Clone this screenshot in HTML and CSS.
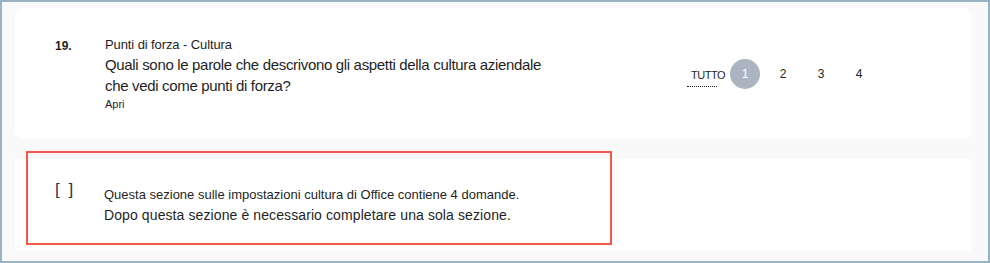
FILE: index.html
```html
<!DOCTYPE html>
<html lang="it">
<head>
    <meta charset="UTF-8">
    <title>Punti di forza - Cultura</title>
    <link rel="stylesheet" href="styles.css">
</head>
<body>
    <div class="frame">
        <div class="card question-card">
            <div class="q-number">19.</div>
            <div class="q-body">
                <div class="q-title">Punti di forza - Cultura</div>
                <div class="q-text">Quali sono le parole che descrivono gli aspetti della cultura aziendale<br>che vedi come punti di forza?</div>
                <div class="q-open">Apri</div>
            </div>
            <div class="pager">
                <div class="pager-all">
                    <span class="all-label">TUTTO</span>
                    <span class="all-dots"></span>
                </div>
                <span class="page current">1</span>
                <span class="page">2</span>
                <span class="page">3</span>
                <span class="page">4</span>
            </div>
        </div>

        <div class="card section-card">
            <div class="bracket">[ ]</div>
            <div class="section-text">
                <div class="line-a">Questa sezione sulle impostazioni cultura di Office contiene 4 domande.</div>
                <div class="line-b">Dopo questa sezione è necessario completare una sola sezione.</div>
            </div>
            <div class="highlight"></div>
        </div>
    </div>
</body>
</html>
```

FILE: styles.css
```css
body {
    margin: 0;
    font-family: "Liberation Sans", Arial, sans-serif;
    color: #1f1f1f;
}
.frame {
    box-sizing: border-box;
    width: 990px;
    height: 263px;
    border: 2px solid #98b4c4;
    background: #f9f9f9;
    padding: 6px 17px 0 13px;
}
.card {
    background: #fff;
    position: relative;
}
.question-card {
    height: 131px;
    border-radius: 8px;
    margin-bottom: 20px;
    display: flex;
    box-sizing: border-box;
    padding: 30px 0 0 40px;
}
.q-number {
    width: 50px;
    font-size: 12px;
    font-weight: bold;
    line-height: 17px;
}
.q-body {
    width: 582px;
}
.q-title {
    font-size: 13px;
    line-height: 18px;
    letter-spacing: -0.1px;
    margin-top: -2px;
}
.q-text {
    font-size: 15px;
    line-height: 21px;
    letter-spacing: -0.33px;
}
.q-open {
    font-size: 11px;
    line-height: 17px;
}
.pager {
    display: flex;
    align-items: center;
    gap: 8px;
    height: 30px;
    margin-top: 21px;
}
.pager-all {
    display: flex;
    flex-direction: column;
    margin-left: 4px;
    margin-right: -3px;
}
.all-label {
    font-size: 11px;
    letter-spacing: -0.5px;
    line-height: 14px;
    margin-top: 6px;
}
.all-dots {
    width: 30px;
    margin-left: -4px;
    margin-top: 4px;
    border-bottom: 1px dotted #222;
}
.page {
    width: 30px;
    height: 30px;
    line-height: 30px;
    text-align: center;
    font-size: 12px;
    color: #222;
}
.page.current {
    border-radius: 50%;
    background: #aab5c1;
    color: #fff;
}
.section-card {
    height: 92px;
    display: flex;
    box-sizing: border-box;
    padding: 21px 0 0 40px;
}
.bracket {
    width: 49px;
    font-size: 17px;
    line-height: 20px;
    letter-spacing: 2px;
    color: #2f3540;
}
.section-text {
    margin-top: 4px;
    line-height: 21px;
}
.line-a {
    font-size: 13px;
}
.line-b {
    font-size: 14px;
    letter-spacing: 0.1px;
}
.highlight {
    position: absolute;
    left: 11px;
    top: -8px;
    width: 582px;
    height: 90px;
    border: 2px solid #f2594b;
}
```
